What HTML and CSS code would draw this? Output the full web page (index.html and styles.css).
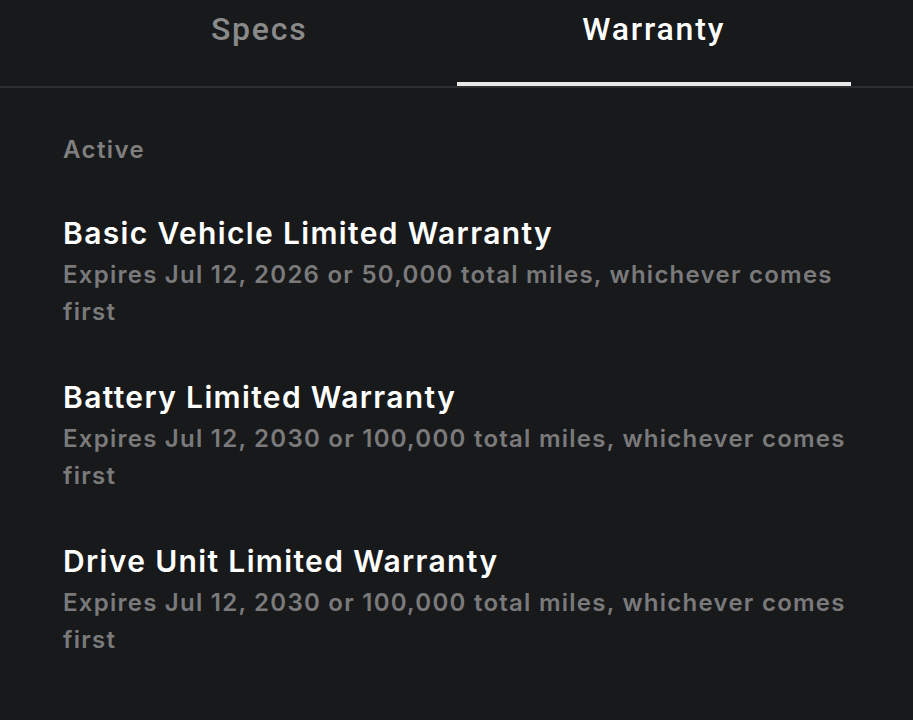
FILE: index.html
```html
<!DOCTYPE html>
<html lang="en">
<head>
    <meta charset="UTF-8">
    <title>Warranty</title>
    <link rel="stylesheet" href="styles.css">
</head>
<body>
    <nav class="tabs">
        <div class="tab-bar">
            <button class="tab">Specs</button>
            <button class="tab active">Warranty</button>
        </div>
    </nav>

    <main class="warranty">
        <h3 class="section-label">Active</h3>

        <div class="warranty-item">
            <h2>Basic Vehicle Limited Warranty</h2>
            <p>Expires Jul 12, 2026 or 50,000 total miles, whichever comes first</p>
        </div>

        <div class="warranty-item">
            <h2>Battery Limited Warranty</h2>
            <p>Expires Jul 12, 2030 or 100,000 total miles, whichever comes first</p>
        </div>

        <div class="warranty-item">
            <h2>Drive Unit Limited Warranty</h2>
            <p>Expires Jul 12, 2030 or 100,000 total miles, whichever comes first</p>
        </div>
    </main>
</body>
</html>
```

FILE: styles.css
```css
* {
    margin: 0;
    padding: 0;
    box-sizing: border-box;
}

body {
    background: #18191b;
    color: #fff;
    font-family: Inter, sans-serif;
    width: 913px;
    height: 720px;
    overflow: hidden;
}

/* Tabs */
.tabs {
    border-bottom: 2px solid #2d2e30;
}

.tab-bar {
    display: flex;
    margin: 0 62px;
}

.tab {
    flex: 1;
    background: none;
    border: none;
    border-bottom: 4px solid transparent;
    padding: 9px 0 33px;
    font-family: Roboto, sans-serif;
    font-weight: 500;
    font-size: 32px;
    letter-spacing: 1.8px;
    line-height: 40px;
    color: #8a8a8a;
}

.tab.active {
    color: #fff;
    border-bottom-color: #e8e8e8;
}

/* Content */
.warranty {
    padding: 46px 63px 0;
}

.section-label {
    font-size: 24px;
    font-weight: 600;
    letter-spacing: 1.4px;
    color: #7f7f80;
    line-height: 32px;
    margin-bottom: 47px;
}

.warranty-item {
    margin-bottom: 47px;
}

.warranty-item h2 {
    font-size: 30px;
    font-weight: 600;
    letter-spacing: 1.35px;
    line-height: 40px;
}

.warranty-item p {
    padding-top: 3px;
    font-size: 24px;
    font-weight: 600;
    letter-spacing: 1.25px;
    line-height: 37px;
    color: #7a7a7b;
}
```
